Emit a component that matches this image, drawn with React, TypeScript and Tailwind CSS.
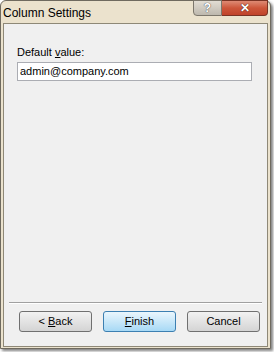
import React from "react"

const font = { fontFamily: '"Liberation Sans", Arial, sans-serif' }

const App: React.FC = () => {
  return (
    <div className="w-[274px] h-[352px] bg-white overflow-hidden" style={font}>
      <div className="w-[271px] h-[349px] bg-[#ebe2cd] border border-[#6f6a5f] rounded-t-[6px] flex flex-col shadow-[2px_2px_3px_rgba(0,0,0,0.5)]">
        <div className="h-[22px] flex items-start justify-between pl-[2px] pr-[2px]">
          <span className="text-[12px] text-black leading-none mt-[6px]">Column Settings</span>
          <div className="flex -mt-px">
            <div className="w-[29px] h-[16px] rounded-bl-[4px] border border-[#7c776c] bg-gradient-to-b from-[#e2ddd3] to-[#bdb8ae] flex items-center justify-center text-[12px] font-bold text-white leading-none [text-shadow:0_0_1px_#555,0_0_1px_#555]">
              ?
            </div>
            <div className="w-[46px] h-[16px] rounded-br-[4px] border border-l-0 border-[#7a3324] bg-gradient-to-b from-[#de8a74] via-[#cd563a] to-[#c0432b] flex items-center justify-center text-[12px] font-bold text-white leading-none [text-shadow:0_0_1px_#4a1a10,0_0_1px_#4a1a10]">
              ✕
            </div>
          </div>
        </div>
        <div className="mx-[2px] mb-[1px] flex-1 border border-[#8e8877] bg-[#f0f0f0] flex flex-col">
          <div className="flex-1 pt-[23px] px-[13px]">
            <div className="text-[11px] text-black leading-none mb-[4px]">
              Default <span className="underline">v</span>alue:
            </div>
            <div className="h-[19px] w-[235px] bg-white border border-[#abadb3] flex items-center px-[2px] text-[11px] text-black">
              admin@company.com
            </div>
          </div>
          <div className="mx-[5px] border-t border-[#a0a0a0] border-b border-b-white" />
          <div className="flex gap-[11px] pl-[15px] pt-[7px] pb-[14px]">
            <button className="w-[73px] h-[21px] rounded-[3px] border border-[#707070] bg-gradient-to-b from-[#f2f2f2] to-[#d4d4d4] text-[11px] text-black leading-none">
              &lt; <span className="underline">B</span>ack
            </button>
            <button className="w-[73px] h-[21px] rounded-[3px] border border-[#3c7fb1] bg-gradient-to-b from-[#eaf6fd] to-[#a7d9f5] text-[11px] text-black leading-none">
              <span className="underline">F</span>inish
            </button>
            <button className="w-[73px] h-[21px] rounded-[3px] border border-[#707070] bg-gradient-to-b from-[#f2f2f2] to-[#d4d4d4] text-[11px] text-black leading-none">
              Cancel
            </button>
          </div>
        </div>
      </div>
    </div>
  )
}

export default App
